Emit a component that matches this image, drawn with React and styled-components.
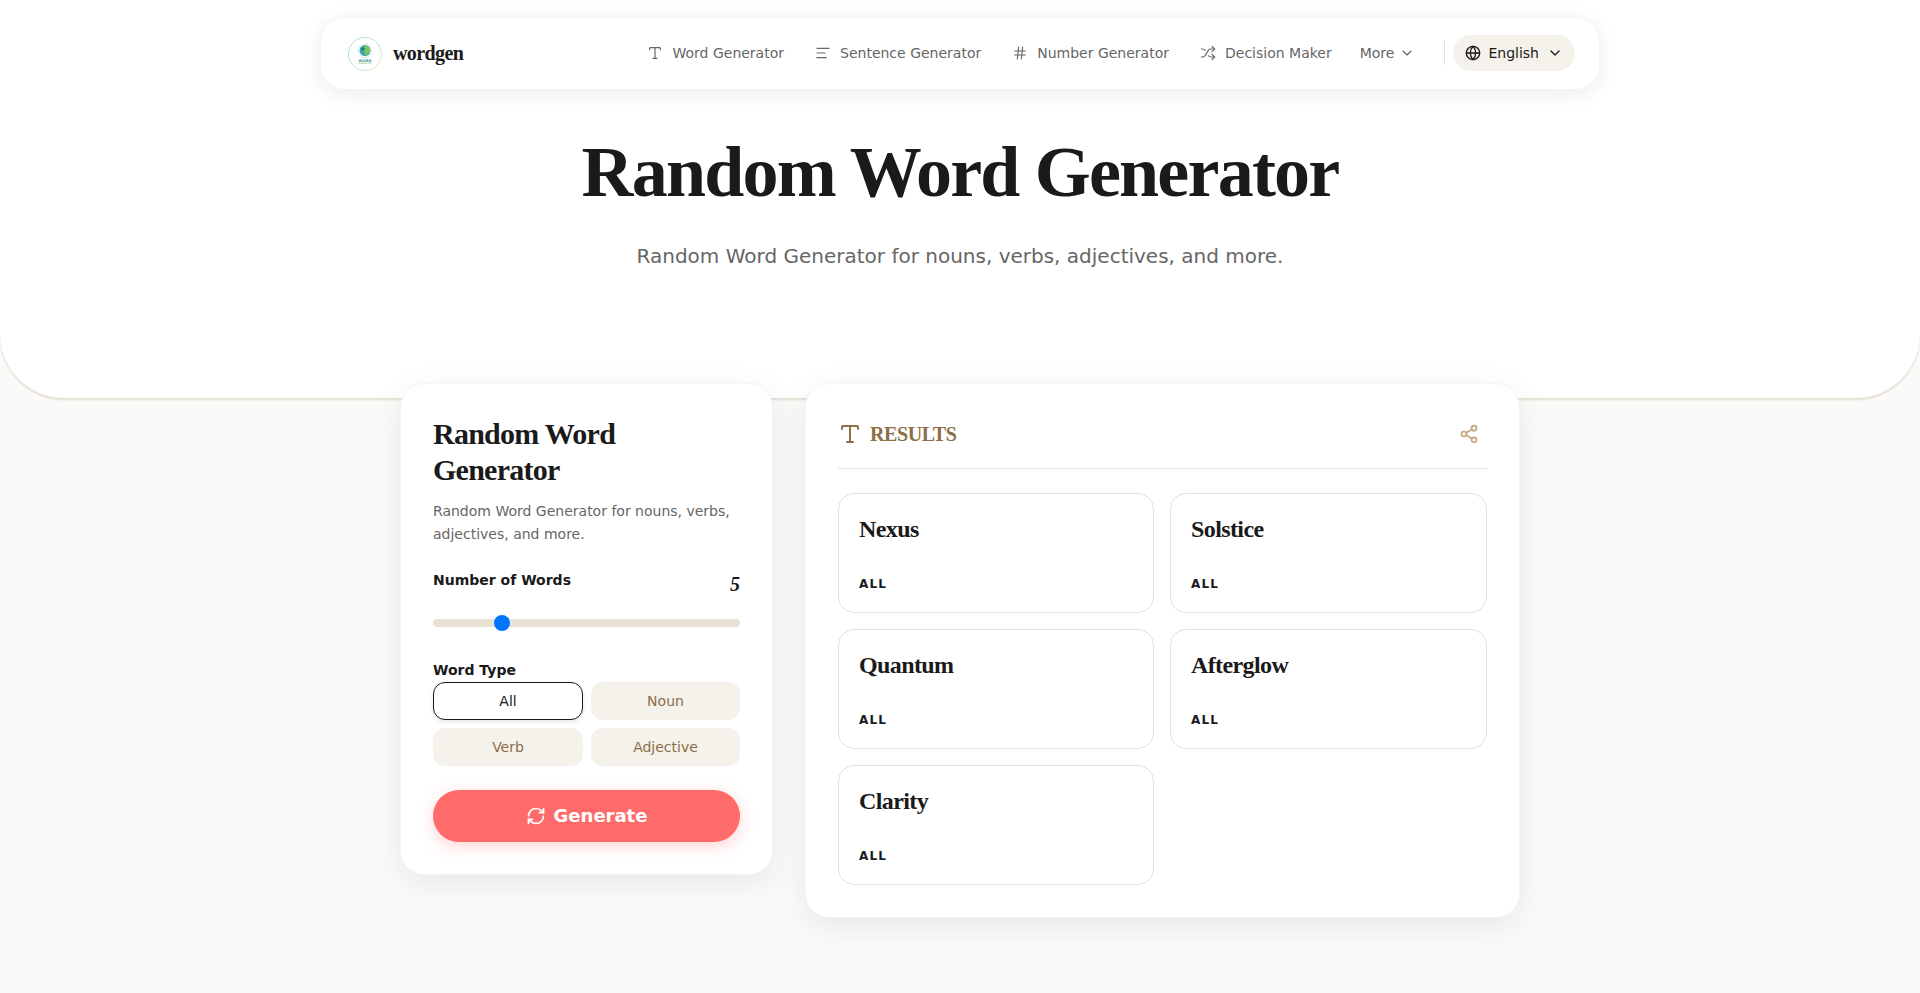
import React from "react";
import styled, { createGlobalStyle } from "styled-components";
import { Type, Text, Hash, Shuffle, ChevronDown, Globe, RefreshCw, Share2 } from "lucide-react";

const serif = `"Liberation Serif", "Times New Roman", serif`;
const sans = `"DejaVu Sans", sans-serif`;

const Global = createGlobalStyle`
  * { box-sizing: border-box; }
  html, body { margin: 0; padding: 0; background: #fbfaf8; font-family: ${sans}; color: #1a1a1a; }
  button { font-family: inherit; }
`;

const Page = styled.div`
  min-height: 993px;
  background: #fbfaf8;
  overflow: hidden;
`;

const Hero = styled.header`
  height: 398px;
  background: #fff;
  border-radius: 0 0 64px 64px;
  box-shadow: 0 2px 2px rgba(139, 111, 71, 0.2);
  padding-top: 17px;
  display: flex;
  flex-direction: column;
  align-items: center;
`;

const NavBar = styled.nav`
  width: 1280px;
  height: 73px;
  flex: none;
  background: #fff;
  border: 1px solid #f6f4f0;
  border-radius: 24px;
  box-shadow: 0 4px 20px rgba(0, 0, 0, 0.08);
  display: flex;
  align-items: center;
  padding: 0 24px 2px 27px;
`;

const Brand = styled.div`
  display: flex;
  align-items: center;
  gap: 11px;
  margin: 2px auto 0 0;
`;

const BrandName = styled.span`
  font-family: ${serif};
  font-size: 20px;
  font-weight: 700;
  letter-spacing: -0.6px;
  color: #1a1a1a;
`;

const NavLinks = styled.div`
  display: flex;
  align-items: center;
`;

const NavLink = styled.a`
  display: flex;
  align-items: center;
  gap: 9px;
  padding: 0 14px 0 17px;
  font-size: 14px;
  color: #666;
  white-space: nowrap;
  svg { flex: none; }
`;

const More = styled(NavLink)`
  gap: 5px;
  padding: 0 27px 0 14px;
`;

const Divider = styled.span`
  width: 1px;
  height: 24px;
  background: #e8e2d5;
  margin: 0 8px 0 2px;
`;

const LangButton = styled.button`
  display: flex;
  align-items: center;
  gap: 7px;
  height: 36px;
  padding: 0 12px;
  border: 0;
  border-radius: 18px;
  background: #f5f1eb;
  color: #1a1a1a;
  font-size: 14px;
`;

const LangChevron = styled(ChevronDown)`
  margin-left: 1px;
`;

const HeroTitle = styled.h1`
  margin: 42px 0 0;
  font-family: ${serif};
  font-size: 72px;
  line-height: 80px;
  font-weight: 700;
  letter-spacing: -1.8px;
  color: #1a1a1a;
`;

const HeroSub = styled.p`
  margin: 30px 0 0;
  font-size: 20px;
  line-height: 28px;
  color: #666;
`;

const Main = styled.main`
  width: 1120px;
  margin: -15px auto 0;
  display: grid;
  grid-template-columns: 373px 715px;
  gap: 32px;
  align-items: start;
  position: relative;
`;

const Card = styled.section`
  background: #fff;
  border: 1px solid #f6f4f0;
  border-radius: 24px;
  box-shadow: 0 8px 32px rgba(0, 0, 0, 0.08);
`;

const Controls = styled(Card)`
  height: 492px;
  padding: 32px;
`;

const CardTitle = styled.h2`
  margin: 0;
  font-family: ${serif};
  font-size: 30px;
  line-height: 36px;
  font-weight: 700;
  letter-spacing: -0.75px;
  color: #1a1a1a;
`;

const CardDesc = styled.p`
  margin: 12px 0 0;
  font-size: 14px;
  line-height: 23px;
  color: #666;
`;

const FieldHead = styled.div`
  display: flex;
  justify-content: space-between;
  align-items: flex-start;
  margin-top: 24px;
`;

const Label = styled.label`
  display: block;
  font-size: 14px;
  line-height: 20px;
  font-weight: 700;
  color: #1a1a1a;
`;

const Value = styled.span`
  font-family: ${serif};
  font-size: 20px;
  line-height: 28px;
  font-weight: 700;
  font-style: italic;
  color: #1a1a1a;
`;

const Slider = styled.input`
  display: block;
  width: 100%;
  height: 8px;
  margin: 21px 0 0;
  appearance: none;
  -webkit-appearance: none;
  background: #e8e2d5;
  border-radius: 4px;
  &::-webkit-slider-thumb {
    -webkit-appearance: none;
    width: 16px;
    height: 16px;
    border-radius: 50%;
    background: #0075ff;
    border: 0;
  }
`;

const TypeLabel = styled(Label)`
  margin-top: 31px;
  line-height: 24px;
`;

const TypeGrid = styled.div`
  display: grid;
  grid-template-columns: 150px 149px;
  gap: 8px;
`;

const TypeButton = styled.button`
  height: 38px;
  border-radius: 12px;
  font-size: 14px;
  border: ${(p) => (p.$active ? "1px solid #1a1a1a" : "0")};
  background: ${(p) => (p.$active ? "#fff" : "#f5f1eb")};
  color: ${(p) => (p.$active ? "#1a1a1a" : "#8b6f47")};
  box-shadow: ${(p) => (p.$active ? "0 2px 4px rgba(0,0,0,0.1)" : "none")};
`;

const Generate = styled.button`
  width: 100%;
  height: 52px;
  margin-top: 24px;
  padding-bottom: 2px;
  border: 0;
  border-radius: 26px;
  background: #ff6b6b;
  color: #fff;
  font-size: 18px;
  font-weight: 700;
  display: flex;
  align-items: center;
  justify-content: center;
  gap: 8px;
  box-shadow: 0 4px 16px rgba(255, 107, 107, 0.3);
`;

const Results = styled(Card)`
  height: 535px;
  padding: 32px;
`;

const ResultsHead = styled.div`
  margin-top: -2px;
  padding: 1px 8px 15px 0;
  display: flex;
  align-items: center;
  justify-content: space-between;
  border-bottom: 1px solid #e8e2d5;
  height: 55px;
`;

const ResultsTitle = styled.h3`
  margin: 0;
  display: flex;
  align-items: center;
  gap: 8px;
  font-family: ${serif};
  font-size: 20px;
  font-weight: 700;
  letter-spacing: -0.4px;
  color: #8b6f47;
`;

const WordGrid = styled.div`
  display: grid;
  grid-template-columns: 316px 317px;
  gap: 16px;
  margin-top: 24px;
`;

const WordCard = styled.article`
  height: 120px;
  padding: 20px;
  border: 1px solid #e8e2d5;
  border-radius: 16px;
  background: #fff;
  display: flex;
  flex-direction: column;
  justify-content: space-between;
`;

const Word = styled.div`
  font-family: ${serif};
  font-size: 24px;
  line-height: 30px;
  font-weight: 700;
  letter-spacing: -0.6px;
  color: #1a1a1a;
`;

const Tag = styled.div`
  font-size: 12px;
  line-height: 16px;
  font-weight: 700;
  letter-spacing: 1.2px;
  color: #1a1a1a;
`;

const LogoWord = styled.text`
  font-family: ${sans};
  font-weight: 700;
  text-anchor: middle;
`;

const Logo = () => (
  <svg width="34" height="34" viewBox="0 0 34 34" aria-hidden="true">
    <defs>
      <linearGradient id="ring" x1="0" y1="0" x2="1" y2="1">
        <stop offset="0" stopColor="#8fd0dc" />
        <stop offset="1" stopColor="#d8e6a8" />
      </linearGradient>
    </defs>
    <circle cx="17" cy="17" r="16.5" fill="#fff" stroke="url(#ring)" strokeWidth="0.8" />
    <circle cx="17" cy="13.5" r="6.800" fill="none" stroke="#a9d6dc" strokeWidth="0.8" strokeDasharray="2 1" />
    <circle cx="17" cy="13.5" r="5.500" fill="#3fa7b5" />
    <path d="M17 8.300c3 .4 5.500 2.600 5.300 5.500-.3 2.500-2.800 4.200-5.300 4.100.8-2.300-1.200-3.200-.8-5.500.1-1.500.3-2.900.8-4.100z" fill="#7cc65a" />
    <circle cx="15" cy="12" r="1.800" fill="#1f7f8f" />
    <LogoWord x="17" y="24.500" fontSize="3.600" fill="#3a8fa0">WORD</LogoWord>
    <LogoWord x="17" y="27" fontSize="1.900" fill="#93cf78">GENERATOR</LogoWord>
  </svg>
);

const words = ["Nexus", "Solstice", "Quantum", "Afterglow", "Clarity"];
const types = ["All", "Noun", "Verb", "Adjective"];

export default function App() {
  return (
    <Page>
      <Global />
      <Hero>
        <NavBar>
          <Brand>
            <Logo />
            <BrandName>wordgen</BrandName>
          </Brand>
          <NavLinks>
            <NavLink><Type size={16} strokeWidth={1.75} />Word Generator</NavLink>
            <NavLink><Text size={16} strokeWidth={1.75} />Sentence Generator</NavLink>
            <NavLink><Hash size={16} strokeWidth={1.75} />Number Generator</NavLink>
            <NavLink><Shuffle size={16} strokeWidth={1.75} />Decision Maker</NavLink>
            <More>More<ChevronDown size={16} strokeWidth={1.75} /></More>
            <Divider />
            <LangButton><Globe size={16} strokeWidth={2} />English<LangChevron size={16} strokeWidth={2} /></LangButton>
          </NavLinks>
        </NavBar>
        <HeroTitle>Random Word Generator</HeroTitle>
        <HeroSub>Random Word Generator for nouns, verbs, adjectives, and more.</HeroSub>
      </Hero>
      <Main>
        <Controls>
          <CardTitle>Random Word Generator</CardTitle>
          <CardDesc>Random Word Generator for nouns, verbs, adjectives, and more.</CardDesc>
          <FieldHead>
            <Label>Number of Words</Label>
            <Value>5</Value>
          </FieldHead>
          <Slider type="range" min={1} max={20} defaultValue={5} />
          <TypeLabel>Word Type</TypeLabel>
          <TypeGrid>
            {types.map((t, i) => (
              <TypeButton key={t} $active={i === 0}>{t}</TypeButton>
            ))}
          </TypeGrid>
          <Generate><RefreshCw size={20} strokeWidth={2} />Generate</Generate>
        </Controls>
        <Results>
          <ResultsHead>
            <ResultsTitle><Type size={24} strokeWidth={2} />RESULTS</ResultsTitle>
            <Share2 size={20} strokeWidth={2} color="#c4a77d" />
          </ResultsHead>
          <WordGrid>
            {words.map((w) => (
              <WordCard key={w}>
                <Word>{w}</Word>
                <Tag>ALL</Tag>
              </WordCard>
            ))}
          </WordGrid>
        </Results>
      </Main>
    </Page>
  );
}
